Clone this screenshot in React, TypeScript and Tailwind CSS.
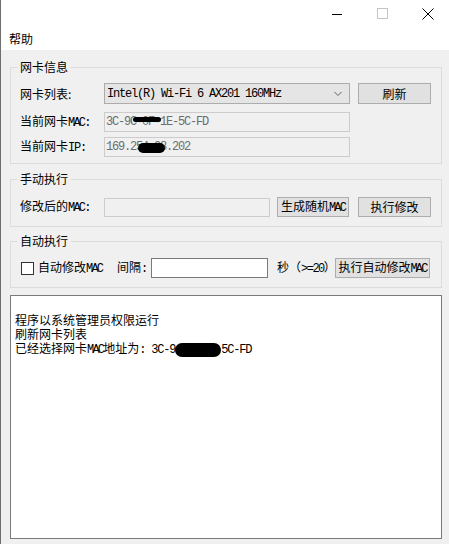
import React from "react";

const CJK = { fontFamily: '"Noto Sans CJK SC", "Noto Sans", sans-serif' };

function M({ children, className = "" }: { children: React.ReactNode; className?: string }) {
  return (
    <span className={"font-['Liberation_Mono',monospace] text-[12px] tracking-[-1.2px] " + className}>
      {children}
    </span>
  );
}

function Btn({ children, className = "" }: { children: React.ReactNode; className?: string }) {
  return (
    <div
      className={
        "flex items-center justify-center shrink-0 bg-[#e1e1e1] border border-[#adadad] text-[12px] leading-[14px] text-black whitespace-nowrap " +
        className
      }
    >
      <span>{children}</span>
    </div>
  );
}

function Group({ title, className = "", children }: { title: string; className?: string; children: React.ReactNode }) {
  return (
    <fieldset className={"mx-0 w-[432px] border border-[#dcdcdc] px-[9px] " + className}>
      <legend className="ml-[-3px] px-[3px] text-[12px] leading-[14px] text-black">{title}</legend>
      {children}
    </fieldset>
  );
}

export default function App() {
  return (
    <div
      className="w-[449px] h-[544px] overflow-hidden bg-[#f0f0f0] border-l border-[#6e6e6e] flex flex-col text-black"
      style={CJK}
    >
      {/* title bar */}
      <div className="h-[27px] bg-white flex items-center justify-end shrink-0">
        <div className="w-[40px] h-[27px] shrink-0 flex items-center justify-center">
          <svg width="10" height="10" viewBox="0 0 10 10">
            <line x1="0" y1="5.5" x2="10" y2="5.5" stroke="#000" strokeWidth="1" />
          </svg>
        </div>
        <div className="w-[50px] h-[27px] shrink-0 flex items-center justify-center">
          <svg width="11" height="11" viewBox="0 0 11 11">
            <rect x="0.5" y="0.5" width="10" height="10" fill="none" stroke="#c4c4c4" strokeWidth="1" />
          </svg>
        </div>
        <div className="w-[42px] h-[27px] shrink-0 flex items-center justify-center">
          <svg width="12" height="12" viewBox="0 0 12 12">
            <path d="M0.5 0.5 L11.5 11.5 M11.5 0.5 L0.5 11.5" stroke="#000" strokeWidth="1" fill="none" />
          </svg>
        </div>
      </div>
      {/* menu bar */}
      <div className="h-[23px] bg-white flex items-center pl-[8px] shrink-0">
        <span className="text-[12px] leading-[14px] mt-[1px]">帮助</span>
      </div>

      <div className="pl-[9px] flex flex-col">
        {/* group 1 */}
        <Group title="网卡信息" className="mt-[10px] pt-[9px] pb-[6px]">
          <div className="flex items-center h-[21px]">
            <div className="w-[84px] shrink-0 text-[12px] leading-[14px] whitespace-nowrap">网卡列表:</div>
            <div className="relative w-[246px] shrink-0 h-[21px] bg-[#e5e5e5] border border-[#acacac] flex items-center pl-[2px]">
              <M className="text-black">Intel(R) Wi-Fi 6 AX201 160MHz</M>
              <svg className="absolute right-[7px] top-[7px]" width="8" height="6" viewBox="0 0 8 6">
                <polyline points="0.5,1 4,4.5 7.5,1" fill="none" stroke="#606060" strokeWidth="1" />
              </svg>
            </div>
            <Btn className="ml-[8px] w-[73px] h-[21px]">刷新</Btn>
          </div>
          <div className="flex items-center h-[20px] mt-[8px]">
            <div className="w-[84px] shrink-0 text-[12px] leading-[14px] whitespace-nowrap">
              当前网卡<M className="tracking-[-1.8px]">MAC</M>
              <M>:</M>
            </div>
            <div className="relative w-[246px] shrink-0 h-[20px] bg-[#f0f0f0] border border-[#cccccc] flex items-center pl-[1px]">
              <M className="text-[#6d6d6d]">3C-9C-0F-1E-5C-FD</M>
              <div className="absolute left-[28px] top-[4px] w-[28px] h-[5px] rounded-full bg-black" />
            </div>
          </div>
          <div className="flex items-center h-[20px] mt-[5px]">
            <div className="w-[84px] shrink-0 text-[12px] leading-[14px] whitespace-nowrap">
              当前网卡<M>IP:</M>
            </div>
            <div className="relative w-[246px] shrink-0 h-[20px] bg-[#f0f0f0] border border-[#cccccc] flex items-center pl-[1px]">
              <M className="text-[#6d6d6d]">169.254.98.202</M>
              <div className="absolute left-[33px] top-[5px] w-[27px] h-[10px] rounded-full bg-black" />
            </div>
          </div>
        </Group>

        {/* group 2 */}
        <Group title="手动执行" className="mt-[8px] pt-[11px] pb-[9px]">
          <div className="flex items-center h-[20px]">
            <div className="w-[84px] shrink-0 text-[12px] leading-[14px] whitespace-nowrap">
              修改后的<M className="tracking-[-1.8px]">MAC</M>
              <M>:</M>
            </div>
            <div className="w-[166px] shrink-0 h-[19px] bg-[#f0f0f0] border border-[#cccccc]" />
            <Btn className="ml-[7px] w-[72px] h-[20px]">
              生成随机<M className="tracking-[-1.8px]">MAC</M>
            </Btn>
            <Btn className="ml-[9px] w-[73px] h-[20px]">执行修改</Btn>
          </div>
        </Group>

        {/* group 3 */}
        <Group title="自动执行" className="mt-[7px] pt-[10px] pb-[9px]">
          <div className="flex items-center h-[20px] text-[12px] leading-[14px] whitespace-nowrap">
            <div className="ml-[1px] w-[13px] h-[13px] border border-[#333333] bg-white shrink-0" />
            <span className="ml-[4px] w-[79px] shrink-0">
              自动修改<M className="tracking-[-1.8px]">MAC</M>
            </span>
            <span className="w-[34px] shrink-0">
              间隔<M>:</M>
            </span>
            <div className="w-[117px] shrink-0 h-[20px] bg-white border border-[#7a7a7a]" />
            <span className="ml-[9px] w-[58px] shrink-0 text-[12px]">
              秒（<M className="tracking-[-1.5px]">&gt;=20</M>）
            </span>
            <Btn className="w-[95px] h-[20px]">
              执行自动修改<M className="tracking-[-1.8px]">MAC</M>
            </Btn>
          </div>
        </Group>

        {/* log */}
        <div className="mt-[7px] w-[432px] h-[244px] bg-white border border-[#7a7a7a] pt-[17px] px-[4px] text-[12px] leading-[14px]">
          <div>程序以系统管理员权限运行</div>
          <div>刷新网卡列表</div>
          <div className="whitespace-nowrap h-[14px]">
            已经选择网卡<M className="tracking-[-1.8px]">MAC</M>地址为<M>: 3C-9</M>
            <span className="inline-block w-[46px] h-[14px] my-[-1px] rounded-full bg-black align-[-3px]" />
            <M>5C-FD</M>
          </div>
        </div>
      </div>
    </div>
  );
}
